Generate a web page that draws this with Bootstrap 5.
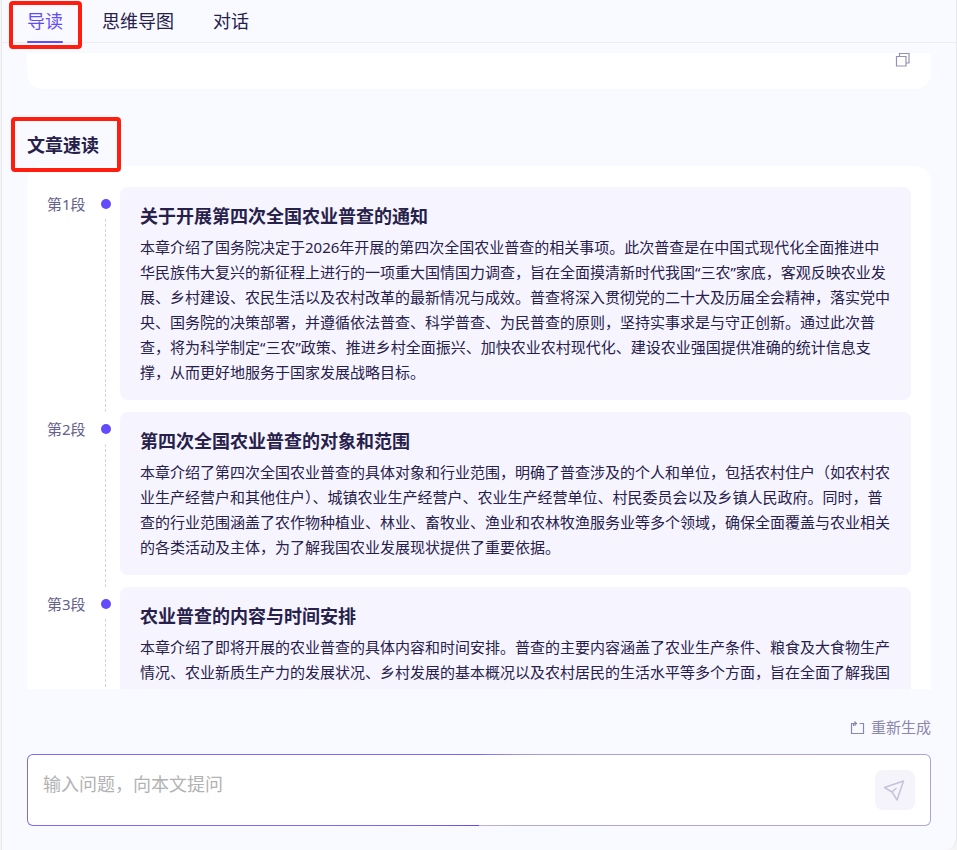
<!DOCTYPE html>
<html lang="zh-CN">
<head>
<meta charset="utf-8">
<meta name="viewport" content="width=device-width, initial-scale=1">
<title>文章导读</title>
<link href="https://cdn.jsdelivr.net/npm/bootstrap@5.3.0/dist/css/bootstrap.min.css" rel="stylesheet">
<style>
  body { font-family: "Noto Sans", "Noto Sans CJK SC", sans-serif; color: #26214a; background: #f5f5f6; font-size: 15px; line-height: 25px; }
  .reader-panel { background: #f9faff; border: 1px solid #e6e8ee; border-width: 0 1px; border-bottom-right-radius: 12px; margin-left: 1px; }
  .tab-bar { border-bottom: 1px solid #ebedf3; padding: 0 25px; gap: 39px; }
  .tab-bar .tab-btn { background: none; border: 0; padding: 8px 0 7px; font-size: 18px; line-height: 27px; color: #26214a; position: relative; }
  .tab-bar .tab-btn.active { color: #624aff; }
  .tab-bar .tab-btn.active::after { content: ""; position: absolute; left: 0; right: 0; bottom: -1px; height: 2px; border-radius: 1px; background: #624aff; }
  .callout-frame { position: absolute; z-index: 1; border: 4px solid #ff1d10; border-radius: 4px; pointer-events: none; }
  .tab-callout { inset: 1px -19px -7px -18px; }
  .title-callout { inset: -15px -22px -14px -16px; }
  .reader-scroll { min-height: 0; margin-top: 10px; padding: 0 25px; }
  .summary-end { background: #fff; border-radius: 0 0 16px 16px; height: 36px; padding: 0 20px; }
  .icon-btn { background: none; border: 0; padding: 0; color: #9591b6; line-height: 0; }
  .section-title { font-size: 18px; line-height: 26px; font-weight: 700; margin: 43px 0 8px; width: fit-content; }
  .reading-card { background: #fff; border-radius: 16px; padding: 21px 20px 20px; }
  .step-label { width: 53px; padding-top: 5px; color: #65618a; }
  .step-rail { width: 12px; margin-right: 8px; padding-top: 12px; }
  .step-dot { width: 10px; height: 10px; border-radius: 50%; background: #624aff; }
  .step-line { flex: 1 1 0; width: 0; margin: 10px 1px 0 0; border-left: 1px dashed #d5d4df; }
  .step-body { background: #f6f4ff; border-radius: 8px; padding: 16px 20px 15px; margin-bottom: 12px; min-width: 0; }
  .step-body h3 { font-size: 18px; line-height: 27px; font-weight: 700; margin: 0 0 5px; }
  .step-body p { margin: 0; }
  .reader-footer { padding: 26px 25px 24px; }
  .regen-btn { background: none; border: 0; padding: 0; color: #8b87ac; gap: 6px; }
  .ask-box { margin-top: 14px; border: 1px solid transparent; border-radius: 6px; padding: 15px;
    background: linear-gradient(#fff, #fff) padding-box,
      conic-gradient(from 180deg, #5f48e6, #7f6cf2 85deg, #7a66ee 180deg, #a99be0 240deg, #b0a5dc 280deg, #b9b5d0) border-box; }
  .ask-box textarea { border: 0; outline: 0; resize: none; padding: 0; height: 40px; font-size: 18px; line-height: 28px; background: none; color: #26214a; }
  .ask-box textarea::placeholder { color: #b2b2b2; opacity: 1; }
  .send-btn { width: 40px; height: 40px; border: 0; border-radius: 8px; background: #f5f4fa; color: #c6c3d9; padding: 0; }
</style>
</head>
<body>
<div class="reader-panel vh-100 d-flex flex-column">
  <nav class="tab-bar d-flex flex-shrink-0" aria-label="阅读模式">
    <button type="button" class="tab-btn active">导读<span class="callout-frame tab-callout"></span></button>
    <button type="button" class="tab-btn">思维导图</button>
    <button type="button" class="tab-btn">对话</button>
  </nav>

  <main class="reader-scroll flex-grow-1 overflow-hidden">
    <div class="summary-end d-flex justify-content-end align-items-start">
      <button type="button" class="icon-btn" aria-label="复制">
        <svg width="16" height="14" viewBox="0 0 16 14" fill="none" stroke="currentColor" stroke-width="1.2"><path d="M1.500 3.500h9.500v9.500h-9.500zM4.500 3.500v-3h9.500v9.500h-3"/></svg>
      </button>
    </div>
    <h2 class="section-title position-relative">文章速读<span class="callout-frame title-callout"></span></h2>
    <section class="reading-card">
      <article class="d-flex">
        <div class="step-label flex-shrink-0">第1段</div>
        <div class="step-rail d-flex flex-column align-items-center flex-shrink-0"><span class="step-dot"></span><span class="step-line"></span></div>
        <div class="step-body flex-grow-1">
          <h3>关于开展第四次全国农业普查的通知</h3>
          <p>本章介绍了国务院决定于2026年开展的第四次全国农业普查的相关事项。此次普查是在中国式现代化全面推进中华民族伟大复兴的新征程上进行的一项重大国情国力调查，旨在全面摸清新时代我国“三农”家底，客观反映农业发展、乡村建设、农民生活以及农村改革的最新情况与成效。普查将深入贯彻党的二十大及历届全会精神，落实党中央、国务院的决策部署，并遵循依法普查、科学普查、为民普查的原则，坚持实事求是与守正创新。通过此次普查，将为科学制定“三农”政策、推进乡村全面振兴、加快农业农村现代化、建设农业强国提供准确的统计信息支撑，从而更好地服务于国家发展战略目标。</p>
        </div>
      </article>
      <article class="d-flex">
        <div class="step-label flex-shrink-0">第2段</div>
        <div class="step-rail d-flex flex-column align-items-center flex-shrink-0"><span class="step-dot"></span><span class="step-line"></span></div>
        <div class="step-body flex-grow-1">
          <h3>第四次全国农业普查的对象和范围</h3>
          <p>本章介绍了第四次全国农业普查的具体对象和行业范围，明确了普查涉及的个人和单位，包括农村住户（如农村农业生产经营户和其他住户）、城镇农业生产经营户、农业生产经营单位、村民委员会以及乡镇人民政府。同时，普查的行业范围涵盖了农作物种植业、林业、畜牧业、渔业和农林牧渔服务业等多个领域，确保全面覆盖与农业相关的各类活动及主体，为了解我国农业发展现状提供了重要依据。</p>
        </div>
      </article>
      <article class="d-flex">
        <div class="step-label flex-shrink-0">第3段</div>
        <div class="step-rail d-flex flex-column align-items-center flex-shrink-0"><span class="step-dot"></span><span class="step-line"></span></div>
        <div class="step-body flex-grow-1">
          <h3>农业普查的内容与时间安排</h3>
          <p>本章介绍了即将开展的农业普查的具体内容和时间安排。普查的主要内容涵盖了农业生产条件、粮食及大食物生产情况、农业新质生产力的发展状况、乡村发展的基本概况以及农村居民的生活水平等多个方面，旨在全面了解我国</p>
        </div>
      </article>
    </section>
  </main>

  <footer class="reader-footer flex-shrink-0">
    <div class="d-flex justify-content-end">
      <button type="button" class="regen-btn d-flex align-items-center">
        <svg width="15" height="15" viewBox="0 0 15 15" fill="none" stroke="currentColor" stroke-width="1.2"><path d="M3 3.500h-1.500v10h12v-10h-4M3.500 6v-2.500h3M4.500 1.500l2 2-2 2"/></svg>
        <span>重新生成</span>
      </button>
    </div>
    <form class="ask-box d-flex">
      <textarea class="flex-grow-1" aria-label="提问" placeholder="输入问题，向本文提问"></textarea>
      <button type="button" class="send-btn d-flex align-items-center justify-content-center flex-shrink-0" aria-label="发送">
        <svg width="24" height="24" viewBox="0 0 24 24" fill="none" stroke="currentColor" stroke-width="1.5" stroke-linejoin="round"><path d="M1.500 9.500l19-6.500-6.500 19-5-8zM9 14l4.500-4"/></svg>
      </button>
    </form>
  </footer>
</div>
<script src="https://cdn.jsdelivr.net/npm/bootstrap@5.3.0/dist/js/bootstrap.bundle.min.js"></script>
</body>
</html>
